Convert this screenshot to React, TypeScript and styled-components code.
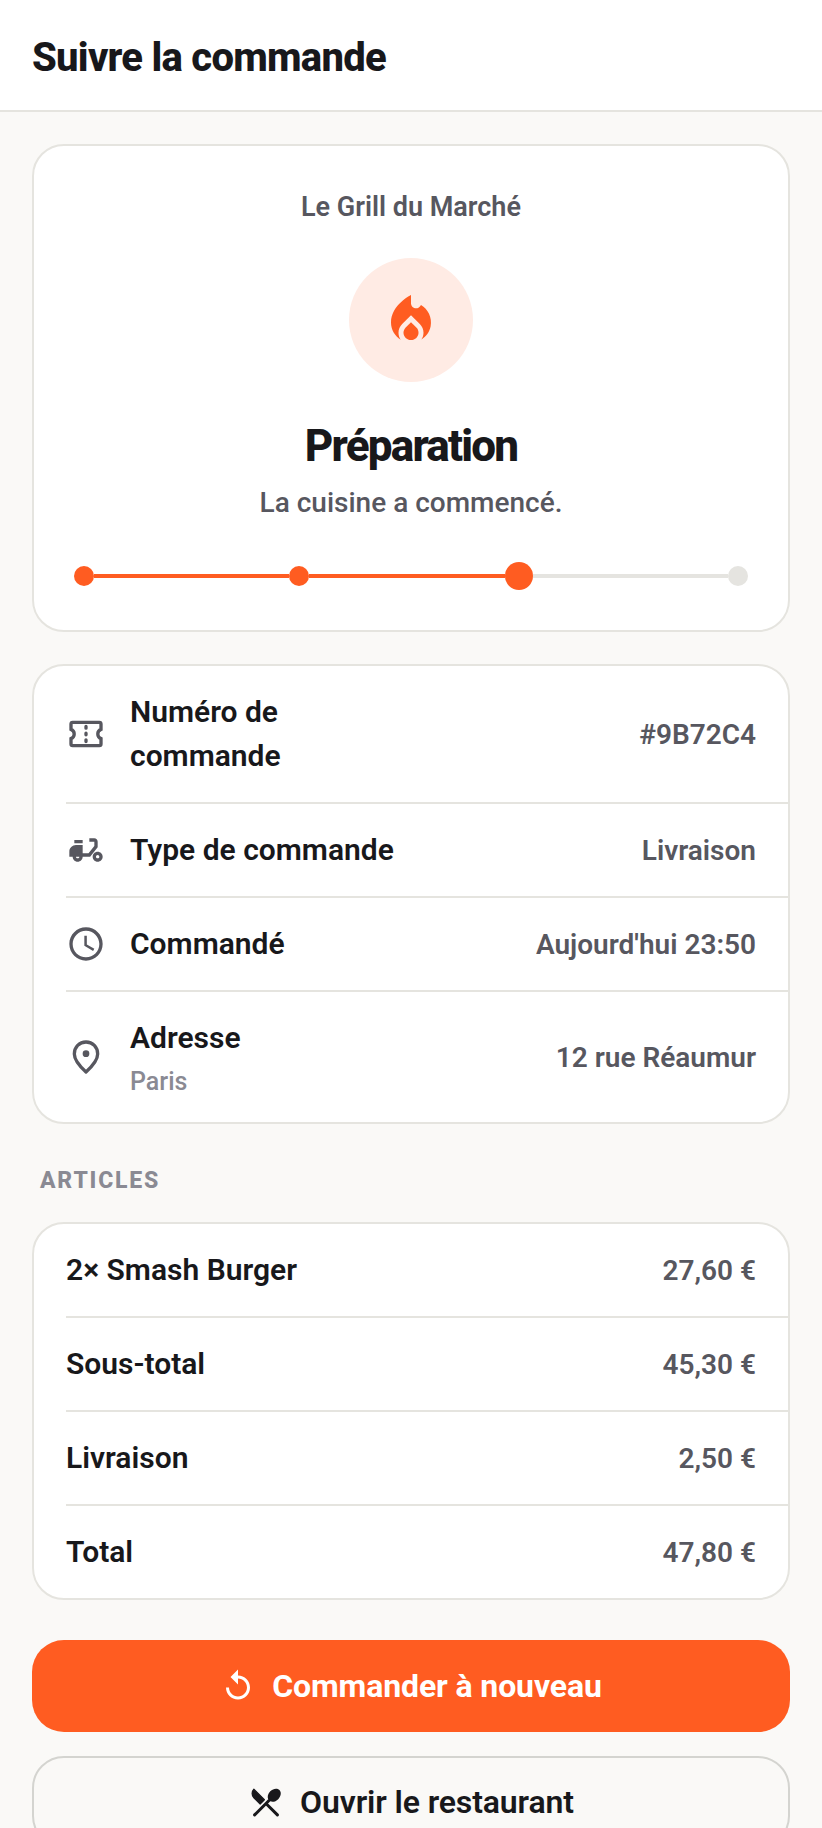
import React from "react";
import styled, { createGlobalStyle } from "styled-components";
import { MdLocalFireDepartment, MdMoped, MdOutlineAccessTime, MdReplay } from "react-icons/md";

const GlobalStyle = createGlobalStyle`
  html, body {
    margin: 0;
    padding: 0;
    background: #faf9f7;
    font-family: Roboto, "Liberation Sans", sans-serif;
    color: #18181b;
    overflow: hidden;
  }
  * { box-sizing: border-box; }
`;

const TicketIcon = () => (
  <svg width="1em" height="1em" viewBox="0 0 24 24" fill="none" stroke="currentColor" strokeWidth="2">
    <path d="M4 5h16a1 1 0 0 1 1 1v3.2a3 3 0 0 0 0 5.6V18a1 1 0 0 1-1 1H4a1 1 0 0 1-1-1v-3.2a3 3 0 0 0 0-5.6V6a1 1 0 0 1 1-1Z" />
    <path d="M12 7.5v1M12 11.5v1M12 15.5v1" strokeLinecap="round" />
  </svg>
);

const PinIcon = () => (
  <svg width="1em" height="1em" viewBox="0 0 24 24" fill="none" stroke="currentColor" strokeWidth="2">
    <path
      d="M12 21C8.5 17.8 5 14.2 5 10.2 5 6 8 3 12 3s7 3 7 7.2c0 4-3.500 7.600-7 10.800Z"
      strokeLinejoin="round"
    />
    <circle cx="12" cy="10" r="2" fill="currentColor" stroke="none" />
  </svg>
);

const CutleryIcon = () => (
  <svg width="1em" height="1em" viewBox="0 0 24 24" fill="currentColor">
    <path
      d="M8.1 13.34 10.93 10.51 3.91 3.5c-1.56 1.56-1.56 4.09 0 5.66z"
      stroke="currentColor"
      strokeWidth="0.8"
      strokeLinejoin="round"
    />
    <path d="M14.88 11.53c1.53.71 3.68.21 5.27-1.38 1.91-1.91 2.28-4.65.81-6.12-1.46-1.46-4.2-1.1-6.12.81-1.59 1.59-2.09 3.74-1.38 5.27z" />
    <path
      d="M4.4 20.6 14 11M12.3 13.300 19.600 20.600"
      fill="none"
      stroke="currentColor"
      strokeWidth="2"
      strokeLinecap="round"
    />
  </svg>
);

const steps = ["done", "done", "current", "todo"] as const;

const infoRows = [
  { icon: <TicketIcon />, label: "Numéro de commande", value: "#9B72C4" },
  { icon: <MdMoped />, label: "Type de commande", value: "Livraison" },
  { icon: <MdOutlineAccessTime />, label: "Commandé", value: "Aujourd'hui 23:50" },
  { icon: <PinIcon />, label: "Adresse", sub: "Paris", value: "12 rue Réaumur" },
];

const itemRows = [
  { label: "2× Smash Burger", value: "27,60 €" },
  { label: "Sous-total", value: "45,30 €" },
  { label: "Livraison", value: "2,50 €" },
  { label: "Total", value: "47,80 €" },
];

export default function App() {
  return (
    <Page>
      <GlobalStyle />
      <Header>
        <Title>Suivre la commande</Title>
      </Header>
      <Content>
        <StatusCard>
          <Restaurant>Le Grill du Marché</Restaurant>
          <StatusIcon>
            <MdLocalFireDepartment />
          </StatusIcon>
          <StatusTitle>Préparation</StatusTitle>
          <StatusText>La cuisine a commencé.</StatusText>
          <Progress>
            {steps.map((step, i) => (
              <React.Fragment key={i}>
                <Dot $state={step} />
                {i < steps.length - 1 && <Line $active={step === "done"} />}
              </React.Fragment>
            ))}
          </Progress>
        </StatusCard>

        <Card>
          {infoRows.map((row) => (
            <Row key={row.label}>
              <RowIcon>{row.icon}</RowIcon>
              <RowLabel>
                <Label>{row.label}</Label>
                {row.sub && <Sub>{row.sub}</Sub>}
              </RowLabel>
              <Value>{row.value}</Value>
            </Row>
          ))}
        </Card>

        <SectionTitle>ARTICLES</SectionTitle>

        <Card>
          {itemRows.map((row) => (
            <Row key={row.label}>
              <RowLabel>
                <Label>{row.label}</Label>
              </RowLabel>
              <Value>{row.value}</Value>
            </Row>
          ))}
        </Card>

        <PrimaryButton>
          <MdReplay />
          Commander à nouveau
        </PrimaryButton>
        <SecondaryButton>
          <CutleryIcon />
          Ouvrir le restaurant
        </SecondaryButton>
      </Content>
    </Page>
  );
}

const Page = styled.div`
  width: 822px;
  height: 1828px;
  overflow: hidden;
`;
const Header = styled.header`
  height: 112px;
  padding: 4px 0 0 32px;
  display: flex;
  align-items: center;
  background: #fff;
  border-bottom: 2px solid #e5e4df;
`;
const Title = styled.h1`
  margin: 0;
  font-size: 40px;
  font-weight: 800;
  letter-spacing: -0.75px;
`;
const Content = styled.main`
  padding: 32px;
  display: flex;
  flex-direction: column;
`;
const Card = styled.section`
  background: #fff;
  border: 2px solid #e5e4df;
  border-radius: 32px;
  overflow: hidden;
  margin-bottom: 32px;
`;
const StatusCard = styled(Card)`
  height: 488px;
  padding: 41px 40px 0;
  display: flex;
  flex-direction: column;
  align-items: center;
`;
const Restaurant = styled.div`
  font-size: 27px;
  line-height: 40px;
  font-weight: 600;
  color: #57575f;
`;
const StatusIcon = styled.div`
  width: 124px;
  height: 124px;
  margin-top: 31px;
  border-radius: 50%;
  background: #ffebe4;
  color: #ff5c21;
  font-size: 60px;
  display: flex;
  align-items: center;
  justify-content: center;
`;
const StatusTitle = styled.h2`
  margin: 36px 0 0;
  font-size: 44px;
  line-height: 56px;
  font-weight: 800;
  letter-spacing: -1.8px;
`;
const StatusText = styled.p`
  margin: 11px 0 0;
  font-size: 28px;
  line-height: 36px;
  font-weight: 500;
  color: #57575f;
`;
const Progress = styled.div`
  width: 100%;
  margin-top: 41px;
  display: flex;
  align-items: center;
`;
const Dot = styled.span<{ $state: "done" | "current" | "todo" }>`
  flex: none;
  width: ${(p) => (p.$state === "current" ? 28 : 20)}px;
  height: ${(p) => (p.$state === "current" ? 28 : 20)}px;
  border-radius: 50%;
  background: ${(p) => (p.$state === "todo" ? "#e5e4e0" : "#ff5c21")};
`;
const Line = styled.span<{ $active: boolean }>`
  flex: 1;
  height: 4px;
  background: ${(p) => (p.$active ? "#ff5c21" : "#e5e4e0")};
`;
const Row = styled.div`
  margin-left: 32px;
  padding: 24px 32px 24px 0;
  display: flex;
  align-items: center;
  border-bottom: 2px solid #e5e4df;
  &:last-child {
    border-bottom: none;
  }
`;
const RowIcon = styled.div`
  flex: none;
  width: 40px;
  margin-right: 24px;
  font-size: 40px;
  color: #57575f;
  display: flex;
  align-items: center;
  justify-content: center;
`;
const RowLabel = styled.div`
  flex: 1;
  min-width: 0;
  padding-right: 24px;
`;
const Label = styled.div`
  font-size: 30px;
  line-height: 44px;
  font-weight: 600;
  max-width: 280px;
  width: max-content;
`;
const Sub = styled.div`
  margin-top: 6px;
  font-size: 25px;
  line-height: 32px;
  color: #8a8a93;
  font-weight: 500;
`;
const Value = styled.div`
  flex: none;
  font-size: 28px;
  font-weight: 600;
  color: #57575f;
`;
const SectionTitle = styled.div`
  margin: 10px 0 26px 8px;
  font-size: 23px;
  line-height: 30px;
  font-weight: 800;
  letter-spacing: 1.8px;
  color: #8a8a93;
`;
const PrimaryButton = styled.button`
  flex: none;
  height: 92px;
  margin-top: 8px;
  border: none;
  border-radius: 32px;
  background: #ff5c21;
  color: #fff;
  font: 700 32px Roboto, sans-serif;
  letter-spacing: -0.12px;
  display: flex;
  align-items: center;
  justify-content: center;
  gap: 16px;
  svg { font-size: 36px; }
`;
const SecondaryButton = styled(PrimaryButton)`
  margin-top: 24px;
  border: 2px solid #d4d4d0;
  background: transparent;
  color: #18181b;
  font-weight: 600;
`;
